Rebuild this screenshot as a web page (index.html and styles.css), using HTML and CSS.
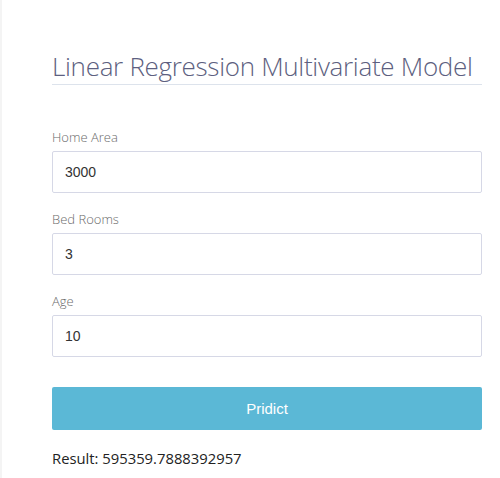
FILE: index.html
```html
<!DOCTYPE html>
<html lang="en">
<head>
    <meta charset="UTF-8">
    <meta name="viewport" content="width=device-width, initial-scale=1.0">
    <title>Linear Regression Multivariate Model</title>
    <link rel="stylesheet" href="styles.css">
</head>
<body>
    <div class="container">
        <h1>Linear Regression Multivariate Model</h1>
        <form id="predict-form">
            <div class="form-group">
                <label for="area">Home Area</label>
                <input type="text" id="area" value="3000">
            </div>
            <div class="form-group">
                <label for="rooms">Bed Rooms</label>
                <input type="text" id="rooms" value="3">
            </div>
            <div class="form-group">
                <label for="age">Age</label>
                <input type="text" id="age" value="10">
            </div>
            <button type="button" id="predict-btn">Pridict</button>
        </form>
        <p class="result">Result: <span id="result">595359.7888392957</span></p>
    </div>
</body>
</html>
```

FILE: styles.css
```css
body {
    font-family: 'Open Sans', 'Noto Sans', sans-serif;
    background-color: #fff;
    margin: 0;
    padding: 0;
    border-left: 2px solid #f4f4f4;
    min-height: 478px;
    box-sizing: border-box;
}

.container {
    width: 430px;
    margin-left: 50px;
    padding-top: 50px;
}

h1 {
    font-size: 26px;
    font-weight: 300;
    letter-spacing: -0.3px;
    color: #5d5f80;
    margin: 0 0 44px;
    padding-bottom: 2px;
    border-bottom: 1px solid #dde3ec;
    line-height: 32px;
    white-space: nowrap;
}

.form-group {
    margin-bottom: 18px;
}

label {
    display: block;
    font-size: 13px;
    font-weight: 300;
    color: #6b6b6b;
    margin-bottom: 6px;
    line-height: 16px;
}

input {
    width: 100%;
    height: 42px;
    padding: 0 12px;
    border: 1px solid #d6d8e6;
    border-radius: 2px;
    font-family: 'Liberation Sans', Arial, sans-serif;
    font-size: 14px;
    color: #333;
    box-sizing: border-box;
}

button {
    width: 100%;
    height: 43px;
    margin-top: 12px;
    background-color: #5bb8d6;
    color: white;
    border: none;
    border-radius: 2px;
    font-family: 'Liberation Sans', Arial, sans-serif;
    font-size: 15px;
    cursor: pointer;
}

.result {
    font-size: 14.8px;
    color: #222;
    margin: 18px 0 0;
}
```
